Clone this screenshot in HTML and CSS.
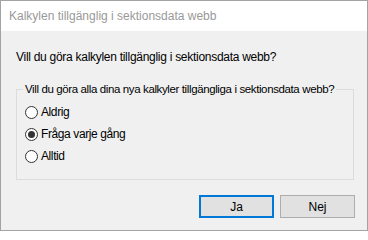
FILE: index.html
```html
<!DOCTYPE html>
<html lang="sv">
<head>
<meta charset="utf-8">
<title>Kalkylen tillgänglig i sektionsdata webb</title>
<link rel="stylesheet" href="styles.css">
</head>
<body>
<div class="window">
  <div class="titlebar">Kalkylen tillgänglig i sektionsdata webb</div>
  <div class="content">
    <p class="question">Vill du göra kalkylen tillgänglig i sektionsdata webb?</p>
    <fieldset class="group">
      <legend class="legend">Vill du göra alla dina nya kalkyler tillgängliga i sektionsdata webb?</legend>
      <div class="option"><span class="radio"></span><span class="label">Aldrig</span></div>
      <div class="option"><span class="radio checked"></span><span class="label">Fråga varje gång</span></div>
      <div class="option"><span class="radio"></span><span class="label">Alltid</span></div>
    </fieldset>
    <div class="buttons">
      <button class="btn default">Ja</button>
      <button class="btn">Nej</button>
    </div>
  </div>
</div>
</body>
</html>
```
FILE: styles.css
```css
html, body {
  margin: 0;
  padding: 0;
  background: #ffffff;
}
body {
  font-family: "Liberation Sans", Arial, sans-serif;
  font-size: 12px;
  color: #000;
}
.window {
  width: 368px;
  height: 231px;
  box-sizing: border-box;
  border: 1px solid #a3a3a3;
  display: flex;
  flex-direction: column;
  background: #f0f0f0;
}
.titlebar {
  height: 30px;
  line-height: 30px;
  background: #ffffff;
  color: #999999;
  font-size: 12px;
  padding-left: 8px;
}
.content {
  flex: 1;
  display: flex;
  flex-direction: column;
}
.question {
  margin: 19px 0 0 15px;
  line-height: 15px;
  font-size: 12px;
  letter-spacing: -0.28px;
  white-space: nowrap;
}
.group {
  margin: 17px 13px 0 15px;
  padding: 4px 6px 12px 6px;
  border: 1px solid #dcdcdc;
  min-width: 0;
}
.legend {
  padding: 0 2px;
  line-height: 15px;
  font-size: 11.5px;
  letter-spacing: -0.38px;
  white-space: nowrap;
}
.option {
  height: 22px;
  display: flex;
  align-items: center;
  padding-left: 2px;
}
.radio {
  width: 11px;
  height: 11px;
  border: 1px solid #333333;
  border-radius: 50%;
  background: #ffffff;
  display: flex;
  align-items: center;
  justify-content: center;
  margin-right: 3px;
}
.radio.checked::after {
  content: "";
  width: 7px;
  height: 7px;
  border-radius: 50%;
  background: #333333;
}
.label {
  line-height: 15px;
  letter-spacing: -0.4px;
}
.buttons {
  display: flex;
  justify-content: flex-end;
  gap: 6px;
  margin-top: 15px;
  padding-right: 12px;
}
.btn {
  width: 75px;
  height: 23px;
  box-sizing: border-box;
  background: #e1e1e1;
  border: 1px solid #adadad;
  font-family: "Liberation Sans", Arial, sans-serif;
  font-size: 12px;
  color: #000;
  padding: 0;
  margin: 0;
}
.btn.default {
  border: 2px solid #0078d7;
}
```
